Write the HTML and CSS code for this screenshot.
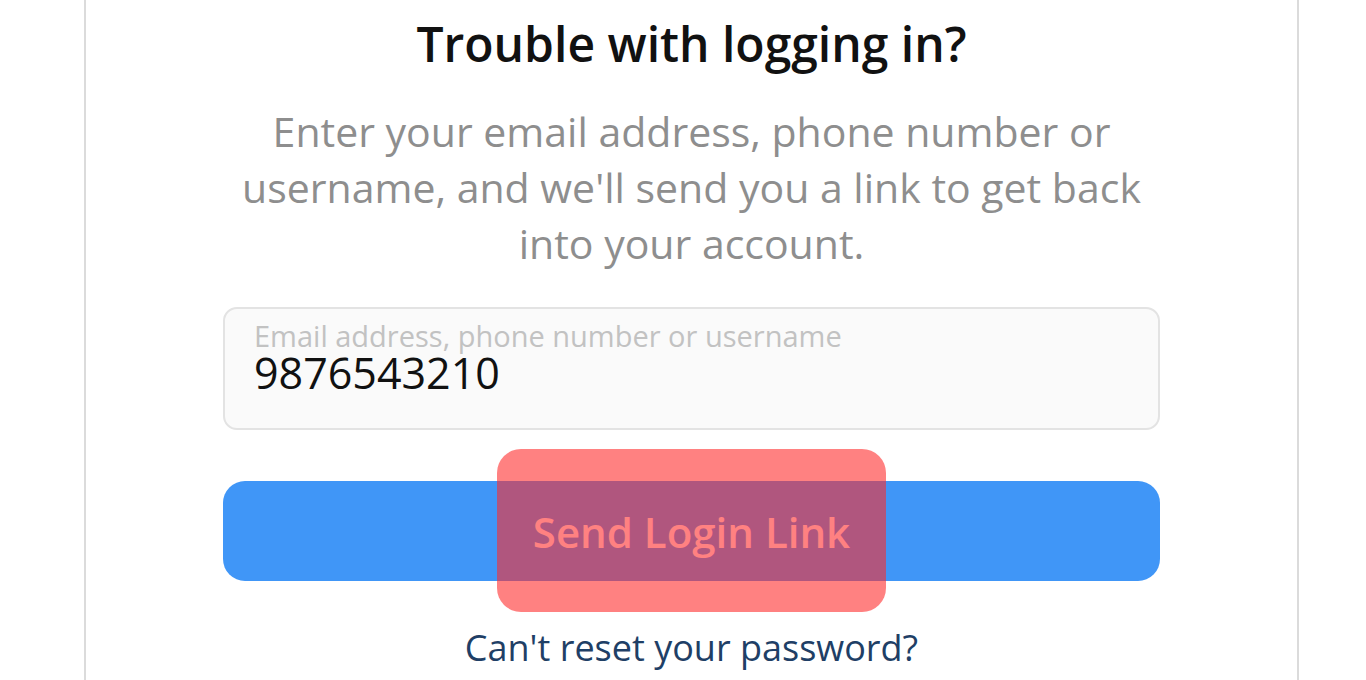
FILE: index.html
```html
<!DOCTYPE html>
<html lang="en">
<head>
<meta charset="utf-8">
<title>Trouble with logging in?</title>
<link rel="stylesheet" href="styles.css">
</head>
<body>
<main class="card">
  <h1 class="title">Trouble with logging in?</h1>
  <p class="desc">Enter your email address, phone number or username, and we'll send you a link to get back into your account.</p>
  <label class="field">
    <span class="field-label">Email address, phone number or username</span>
    <span class="field-value">9876543210</span>
  </label>
  <div class="btn-wrap">
    <button class="btn" type="button">Send Login Link</button>
    <span class="highlight"></span>
  </div>
  <a class="link" href="#">Can't reset your password?</a>
</main>
</body>
</html>
```
FILE: styles.css
```css
html, body {
  margin: 0;
  padding: 0;
  background: #ffffff;
  height: 680px;
  overflow: hidden;
}
body {
  font-family: "Open Sans", "Noto Sans", sans-serif;
}
.card {
  box-sizing: border-box;
  width: 1215px;
  height: 680px;
  margin-left: 84px;
  border-left: 2px solid #dbdbdb;
  border-right: 2px solid #dbdbdb;
  padding: 13px 137px 0;
  display: flex;
  flex-direction: column;
  align-items: stretch;
}
.title {
  margin: 0;
  font-size: 48px;
  line-height: 62px;
  font-weight: 600;
  color: #111111;
  text-align: center;
}
.desc {
  margin: 28px 0 0;
  font-size: 41px;
  line-height: 56px;
  color: #8e8e8e;
  text-align: center;
}
.field {
  box-sizing: border-box;
  margin-top: 36px;
  height: 123px;
  border: 2px solid #e3e3e3;
  border-radius: 14px;
  background: #fafafa;
  padding: 11px 29px 0;
  display: flex;
  flex-direction: column;
}
.field-label {
  font-size: 29px;
  line-height: 32px;
  color: #c2c2c2;
}
.field-value {
  font-size: 43px;
  line-height: 42px;
  color: #111111;
}
.btn-wrap {
  position: relative;
  margin-top: 51px;
}
.btn {
  display: block;
  width: 100%;
  height: 100px;
  border: none;
  border-radius: 22px;
  background: #4096f7;
  color: #ffffff;
  font-family: inherit;
  font-size: 42px;
  font-weight: 600;
  padding: 0;
}
.highlight {
  position: absolute;
  left: 274px;
  top: -32px;
  width: 389px;
  height: 163px;
  border-radius: 24px;
  background: rgba(255, 40, 40, 0.59);
}
.link {
  align-self: center;
  margin-top: 42px;
  font-size: 36px;
  line-height: 50px;
  color: #1f3f66;
  text-decoration: none;
}
```
